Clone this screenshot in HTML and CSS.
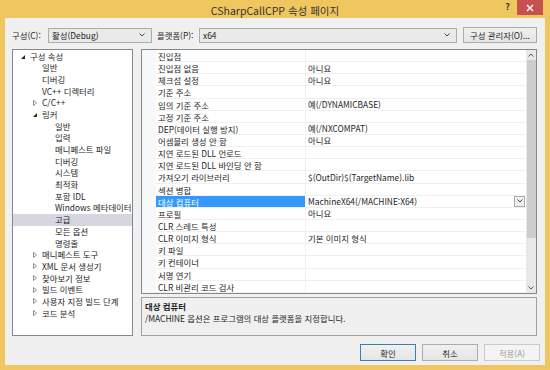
FILE: index.html
```html
<!DOCTYPE html>
<html lang="ko">
<head>
  <meta charset="UTF-8" />
  <title>CSharpCallCPP 속성 페이지</title>
  <link rel="stylesheet" href="styles.css">
</head>
<body>
  <div class="window">

    <!-- Title bar -->
    <div class="titlebar">
      <span></span>
      <span class="title">CSharpCallCPP 속성 페이지</span>
      <div class="caption-buttons">
        <span class="help">?</span>
        <span class="close">
          <svg width="8" height="8" viewBox="0 0 8 8"><path d="M1 1 L7 7 M7 1 L1 7" stroke="#fff" stroke-width="1.4"/></svg>
        </span>
      </div>
    </div>

    <div class="client">

      <!-- Configuration bar -->
      <div class="toolbar">
        <label class="lbl lbl-config">구성(C):</label>
        <div class="combo combo-config">
          <span>활성(Debug)</span>
          <svg class="chev" width="6" height="4" viewBox="0 0 6 4"><path d="M0.5 0.5 L3 3 L5.5 0.5" fill="none" stroke="#444" stroke-width="1"/></svg>
        </div>
        <label class="lbl lbl-platform">플랫폼(P):</label>
        <div class="combo combo-platform">
          <span>x64</span>
          <svg class="chev" width="6" height="4" viewBox="0 0 6 4"><path d="M0.5 0.5 L3 3 L5.5 0.5" fill="none" stroke="#444" stroke-width="1"/></svg>
        </div>
        <button class="btn btn-manager">구성 관리자(O)...</button>
      </div>

      <div class="main">

        <!-- Tree -->
        <div class="tree">
          <div class="node l1"><span class="tog open"></span>구성 속성</div>
          <div class="node l2"><span class="tog"></span>일반</div>
          <div class="node l2"><span class="tog"></span>디버깅</div>
          <div class="node l2"><span class="tog"></span>VC++ 디렉터리</div>
          <div class="node l2"><span class="tog closed"></span>C/C++</div>
          <div class="node l2"><span class="tog open"></span>링커</div>
          <div class="node l3"><span class="tog"></span>일반</div>
          <div class="node l3"><span class="tog"></span>입력</div>
          <div class="node l3"><span class="tog"></span>매니페스트 파일</div>
          <div class="node l3"><span class="tog"></span>디버깅</div>
          <div class="node l3"><span class="tog"></span>시스템</div>
          <div class="node l3"><span class="tog"></span>최적화</div>
          <div class="node l3"><span class="tog"></span>포함 IDL</div>
          <div class="node l3"><span class="tog"></span>Windows 메타데이터</div>
          <div class="node l3 selected"><span class="tog"></span>고급</div>
          <div class="node l3"><span class="tog"></span>모든 옵션</div>
          <div class="node l3"><span class="tog"></span>명령줄</div>
          <div class="node l2"><span class="tog closed"></span>매니페스트 도구</div>
          <div class="node l2"><span class="tog closed"></span>XML 문서 생성기</div>
          <div class="node l2"><span class="tog closed"></span>찾아보기 정보</div>
          <div class="node l2"><span class="tog closed"></span>빌드 이벤트</div>
          <div class="node l2"><span class="tog closed"></span>사용자 지정 빌드 단계</div>
          <div class="node l2"><span class="tog closed"></span>코드 분석</div>
        </div>

        <div class="right">
          <!-- Property grid -->
          <div class="props">
            <div class="rows">
              <div class="row"><span class="gutter"></span><span class="name">진입점</span><span class="value"></span></div>
              <div class="row"><span class="gutter"></span><span class="name">진입점 없음</span><span class="value">아니요</span></div>
              <div class="row"><span class="gutter"></span><span class="name">체크섬 설정</span><span class="value">아니요</span></div>
              <div class="row"><span class="gutter"></span><span class="name">기준 주소</span><span class="value"></span></div>
              <div class="row"><span class="gutter"></span><span class="name">임의 기준 주소</span><span class="value">예(/DYNAMICBASE)</span></div>
              <div class="row"><span class="gutter"></span><span class="name">고정 기준 주소</span><span class="value"></span></div>
              <div class="row"><span class="gutter"></span><span class="name">DEP(데이터 실행 방지)</span><span class="value">예(/NXCOMPAT)</span></div>
              <div class="row"><span class="gutter"></span><span class="name">어셈블리 생성 안 함</span><span class="value">아니요</span></div>
              <div class="row"><span class="gutter"></span><span class="name">지연 로드된 DLL 언로드</span><span class="value"></span></div>
              <div class="row"><span class="gutter"></span><span class="name">지연 로드된 DLL 바인딩 안 함</span><span class="value"></span></div>
              <div class="row"><span class="gutter"></span><span class="name">가져오기 라이브러리</span><span class="value">$(OutDir)$(TargetName).lib</span></div>
              <div class="row"><span class="gutter"></span><span class="name">섹션 병합</span><span class="value"></span></div>
              <div class="row active"><span class="gutter"></span><span class="name">대상 컴퓨터</span><span class="value">MachineX64(/MACHINE:X64)<span class="dd"><svg width="6" height="4" viewBox="0 0 6 4"><path d="M0.5 0.5 L3 3 L5.5 0.5" fill="none" stroke="#444" stroke-width="1"/></svg></span></span></div>
              <div class="row"><span class="gutter"></span><span class="name">프로필</span><span class="value">아니요</span></div>
              <div class="row"><span class="gutter"></span><span class="name">CLR 스레드 특성</span><span class="value"></span></div>
              <div class="row"><span class="gutter"></span><span class="name">CLR 이미지 형식</span><span class="value">기본 이미지 형식</span></div>
              <div class="row"><span class="gutter"></span><span class="name">키 파일</span><span class="value"></span></div>
              <div class="row"><span class="gutter"></span><span class="name">키 컨테이너</span><span class="value"></span></div>
              <div class="row"><span class="gutter"></span><span class="name">서명 연기</span><span class="value"></span></div>
              <div class="row"><span class="gutter"></span><span class="name">CLR 비관리 코드 검사</span><span class="value"></span></div>
            </div>
            <div class="scrollbar">
              <span class="arrow"><svg width="6" height="4" viewBox="0 0 6 4"><path d="M0.5 3.5 L3 1 L5.5 3.5" fill="none" stroke="#555" stroke-width="1"/></svg></span>
              <span class="thumb"></span>
              <span class="track"></span>
              <span class="arrow"><svg width="6" height="4" viewBox="0 0 6 4"><path d="M0.5 0.5 L3 3 L5.5 0.5" fill="none" stroke="#555" stroke-width="1"/></svg></span>
            </div>
          </div>

          <!-- Description -->
          <div class="desc">
            <div class="desc-title">대상 컴퓨터</div>
            <div>/MACHINE 옵션은 프로그램의 대상 플랫폼을 지정합니다.</div>
          </div>
        </div>
      </div>

      <div class="buttons">
        <button class="btn btn-dialog default">확인</button>
        <button class="btn btn-dialog">취소</button>
        <button class="btn btn-dialog disabled">적용(A)</button>
      </div>
    </div>
  </div>
</body>
</html>
```

FILE: styles.css
```css
body {
  margin: 0;
  font-family: "Noto Sans CJK KR", "Noto Sans", sans-serif;
  font-size: 8.4px;
  color: #1e1e1e;
}
.window {
  width: 550px;
  height: 370px;
  background: #efc75e;
  display: flex;
  flex-direction: column;
}
.titlebar {
  height: 18px;
  display: grid;
  grid-template-columns: 1fr auto 1fr;
  align-items: start;
}
.title {
  font-size: 10.5px;
  line-height: 21px;
  color: #333;
}
.caption-buttons {
  display: flex;
  justify-content: flex-end;
  align-items: flex-start;
  margin-right: 7px;
}
.help {
  font-size: 9px;
  font-weight: bold;
  color: #333;
  line-height: 14px;
  margin-right: 7px;
}
.close {
  width: 26px;
  height: 15px;
  background: #c75050;
  display: flex;
  align-items: center;
  justify-content: center;
}
.client {
  flex: 1;
  margin: 0 5px 5px;
  background: #f0f0f0;
  padding: 9px 8px 4px 7px;
  display: flex;
  flex-direction: column;
}
.toolbar {
  height: 16px;
  display: flex;
  align-items: center;
}
.lbl { white-space: nowrap; }
.lbl-config { width: 36px; }
.lbl-platform { width: 42px; margin-left: 5px; }
.combo {
  height: 15px;
  border: 1px solid #acacac;
  background: #eaeaea;
  display: flex;
  align-items: center;
  justify-content: space-between;
  padding: 0 6px 0 3px;
  box-sizing: border-box;
}
.combo-config { width: 104px; }
.combo-platform { flex: 1; }
.btn {
  font-family: inherit;
  font-size: 8.4px;
  color: #1e1e1e;
  border: 1px solid #acacac;
  background: linear-gradient(#f0f0f0, #e5e5e5);
  padding: 0;
  box-sizing: border-box;
}
.btn-manager {
  width: 74px;
  height: 16px;
  margin-left: 6px;
}
.main {
  flex: 1;
  margin-top: 6px;
  display: flex;
  gap: 8px;
  min-height: 0;
}
.tree {
  width: 121px;
  border: 1px solid #828790;
  background: #fff;
  box-sizing: border-box;
  padding-top: 0.5px;
  overflow: hidden;
}
.node {
  height: 11.7px;
  line-height: 11.7px;
  display: flex;
  align-items: center;
  white-space: nowrap;
}
.node.l1 { padding-left: 6px; }
.node.l2 { padding-left: 18px; }
.node.l3 { padding-left: 31px; }
.node.selected { background: #d6d6e0; }
.tog {
  width: 11px;
  height: 11px;
  flex: none;
  position: relative;
}
.tog.open::before {
  content: "";
  position: absolute;
  left: 2px;
  top: 4px;
  border-left: 4px solid transparent;
  border-bottom: 4px solid #262626;
}
.tog.closed::before {
  content: "";
  position: absolute;
  left: 2px;
  top: 2px;
  width: 4px;
  height: 6px;
  background: url("data:image/svg+xml;utf8,<svg xmlns='http://www.w3.org/2000/svg' width='4' height='6' viewBox='0 0 4 6'><path d='M0.5 0.5 L3.5 3 L0.5 5.5 Z' fill='none' stroke='%23828282' stroke-width='0.9'/></svg>") no-repeat;
}
.right {
  flex: 1;
  display: flex;
  flex-direction: column;
  gap: 3px;
}
.props {
  height: 245px;
  border: 1px solid #828790;
  background: #fff;
  box-sizing: border-box;
  display: flex;
  overflow: hidden;
}
.rows {
  flex: 1;
  overflow: hidden;
}
.row {
  display: grid;
  grid-template-columns: 14px 150px 1fr;
  height: 12.15px;
  line-height: 12.15px;
  white-space: nowrap;
}
.gutter { background: #f7f8fa; }
.name, .value {
  padding-left: 2px;
  border-bottom: 1px solid #f0f0f0;
  box-sizing: border-box;
  overflow: hidden;
}
.name { border-right: 1px solid #f0f0f0; }
.value {
  display: flex;
  align-items: center;
}
.row.active .name {
  background: #3399ff;
  color: #fff;
}
.dd {
  margin-left: auto;
  margin-right: 1px;
  width: 11px;
  height: 11px;
  border: 1px solid #acacac;
  background: #f0f0f0;
  box-sizing: border-box;
  display: flex;
  align-items: center;
  justify-content: center;
}
.scrollbar {
  width: 10px;
  background: #e8e8e8;
  display: flex;
  flex-direction: column;
}
.arrow {
  height: 10px;
  display: flex;
  align-items: center;
  justify-content: center;
}
.thumb {
  height: 178px;
  background: #cdcdcd;
  margin: 0 0.5px;
}
.track { flex: 1; }
.desc {
  flex: 1;
  border: 1px solid #a0a0a0;
  background: #f0f0f0;
  padding: 2px 3px;
  line-height: 12px;
}
.desc-title { font-weight: bold; }
.buttons {
  height: 17px;
  margin-top: 8px;
  margin-right: -3px;
  display: flex;
  justify-content: flex-end;
  gap: 6px;
}
.btn-dialog {
  width: 56px;
  height: 17px;
}
.btn-dialog.default { border-color: #3c7fb1; }
.btn-dialog.disabled {
  color: #a0a0a0;
  border-color: #cacaca;
  background: #f4f4f4;
}
```
